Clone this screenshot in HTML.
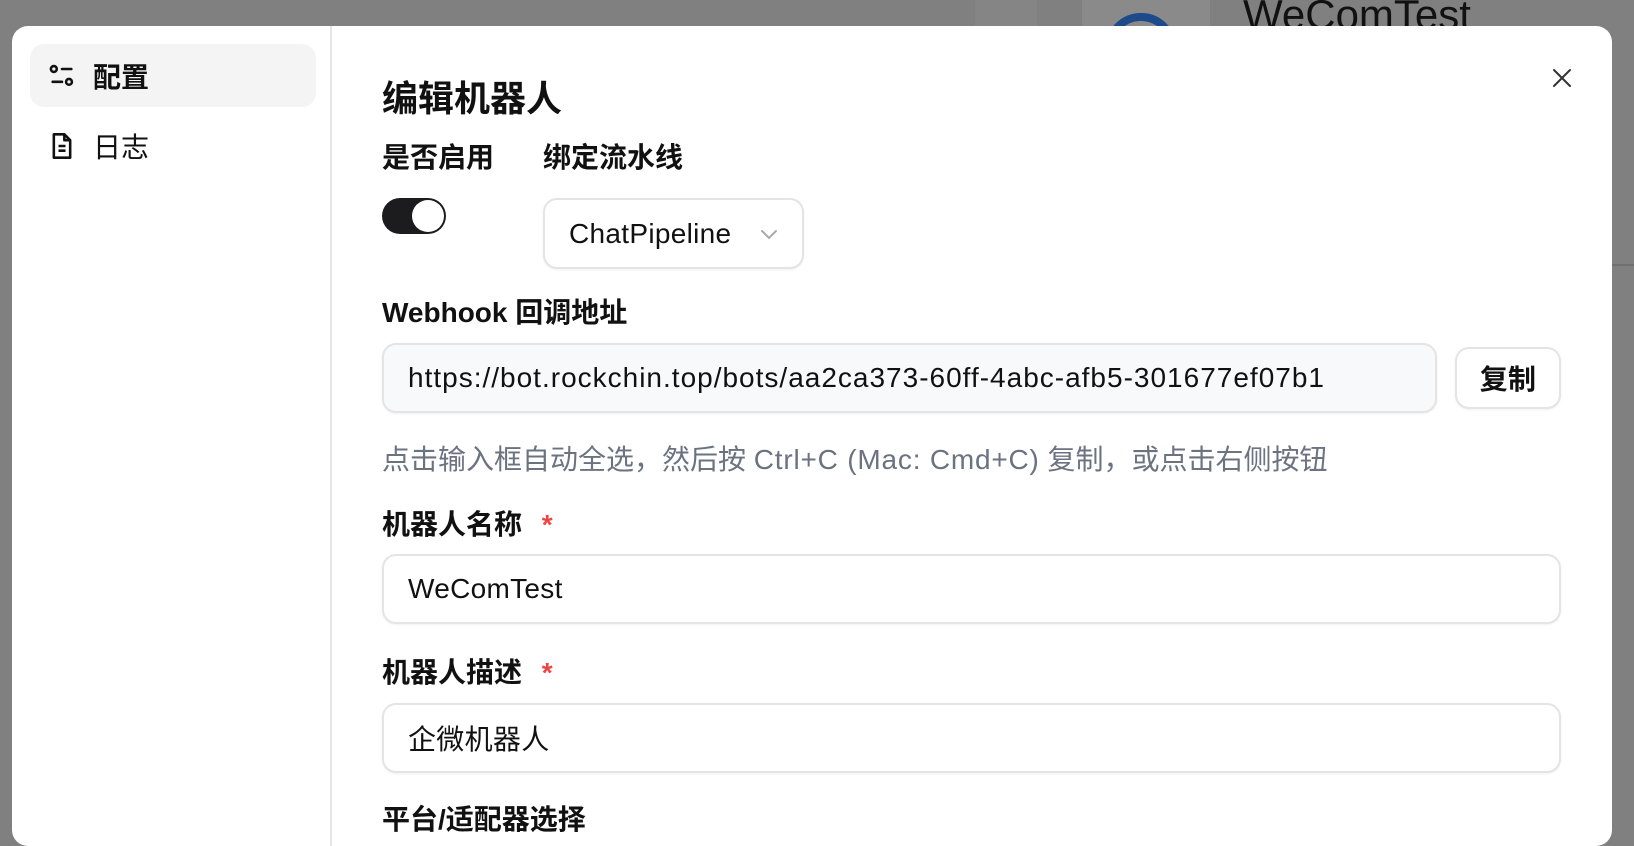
<!DOCTYPE html>
<html><head><meta charset="utf-8"><style>
*{box-sizing:border-box;margin:0;padding:0}
body{width:1634px;height:810px;overflow:hidden;background:#808080;font-family:"Liberation Sans","Noto Sans CJK SC",sans-serif;position:relative;color:#111}
.abs{position:absolute}
.modal{left:12px;top:26px;width:1600px;height:820px;background:#fff;border-radius:16px;overflow:hidden}
.side{left:0;top:0;width:320px;height:100%;border-right:2px solid #e5e5e5}
.item{position:absolute;left:18px;width:286px;height:63px;border-radius:14px;display:flex;align-items:center;font-size:28px}
.lbl{font-size:28px;font-weight:bold;color:#111;line-height:1}
.inp{border:2px solid #e4e4e7;border-radius:14px;display:flex;align-items:center;padding-left:24px;font-size:28px;background:#fff;box-shadow:0 1px 2px rgba(0,0,0,.06);letter-spacing:.3px}
</style></head><body>
<div class="abs" style="left:975px;top:0;width:62px;height:26px;background:#858585"></div>
<div class="abs" style="left:1082px;top:0;width:128px;height:26px;background:#8a8a8a"></div>
<div class="abs" style="left:1105px;top:13px;width:72px;height:72px;border-radius:50%;border:8px solid #1e4a8a"></div>
<div class="abs" style="left:1243px;top:-6px;font-size:42px;color:#111;line-height:1">WeComTest</div>
<div class="abs" style="left:1612px;top:264px;width:22px;height:2px;background:#707070"></div>
<div class="abs modal">
 <div class="abs side">
  <div class="item" style="top:18px;background:#f4f4f5">
   <svg style="margin-left:18px" width="28" height="28" viewBox="0 0 24 24" fill="none" stroke="#111" stroke-width="2.2" stroke-linecap="round"><circle cx="5" cy="6" r="2.5"/><path d="M12 6h8"/><path d="M4 17h8"/><circle cx="18" cy="17" r="2.5"/></svg>
   <span style="margin-left:17px;font-weight:bold">配置</span></div>
  <div class="item" style="top:88px">
   <svg style="margin-left:18px" width="28" height="28" viewBox="0 0 24 24" fill="none" stroke="#111" stroke-width="2.2" stroke-linejoin="round"><path d="M5 2h9l5 5v15H5z"/><path d="M14 2v5h5"/><path d="M9 12h6M9 16h6"/></svg>
   <span style="margin-left:17px">日志</span></div>
 </div>
 <svg class="abs" style="left:1538px;top:40px" width="24" height="24" viewBox="0 0 24 24" stroke="#333" stroke-width="2" stroke-linecap="round"><path d="M4 4l16 16M20 4L4 20"/></svg>
 <div class="abs" style="left:370px;top:44px;font-size:36px;font-weight:bold">编辑机器人</div>
 <div class="abs lbl" style="left:370px;top:118px">是否启用</div>
 <div class="abs lbl" style="left:531px;top:118px">绑定流水线</div>
 <div class="abs" style="left:370px;top:172px;width:64px;height:36px;border-radius:18px;background:#1c1c1e"><div class="abs" style="right:2px;top:2px;width:32px;height:32px;border-radius:50%;background:#fff"></div></div>
 <div class="abs inp" style="left:531px;top:172px;width:261px;height:71px">ChatPipeline
  <svg style="margin-left:26px" width="24" height="24" viewBox="0 0 24 24" fill="none" stroke="#aaa" stroke-width="2" stroke-linecap="round"><path d="M5 9l7 7 7-7"/></svg></div>
 <div class="abs lbl" style="left:370px;top:273px">Webhook 回调地址</div>
 <div class="abs inp" style="left:370px;top:317px;width:1055px;height:70px;background:#f8f9fb;letter-spacing:1px">https://bot.rockchin.top/bots/aa2ca373-60ff-4abc-afb5-301677ef07b1</div>
 <div class="abs inp" style="left:1443px;top:321px;width:106px;height:62px;padding:0;justify-content:center;font-weight:bold">复制</div>
 <div class="abs" style="left:370px;top:412px;font-size:28px;color:#6b7280">点击输入框自动全选，然后按 <span style="letter-spacing:.8px">Ctrl+C (Mac: Cmd+C)</span> 复制，或点击右侧按钮</div>
 <div class="abs lbl" style="left:370px;top:485px">机器人名称 <span style="color:#ef4444;margin-left:12px">*</span></div>
 <div class="abs inp" style="left:370px;top:528px;width:1179px;height:70px">WeComTest</div>
 <div class="abs lbl" style="left:370px;top:633px">机器人描述 <span style="color:#ef4444;margin-left:12px">*</span></div>
 <div class="abs inp" style="left:370px;top:677px;width:1179px;height:70px">企微机器人</div>
 <div class="abs lbl" style="left:370px;top:780px">平台/适配器选择</div>
</div>
</body></html>
